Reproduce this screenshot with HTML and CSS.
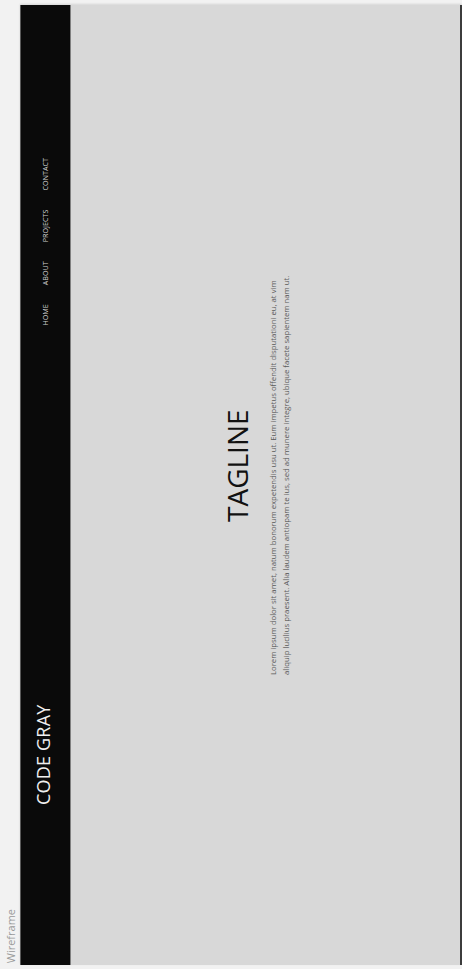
FILE: index.html
```html
<!DOCTYPE html>
<html lang="en">
<head>
<meta charset="utf-8">
<title>Code Gray – Wireframe</title>
<link rel="stylesheet" href="styles.css">
</head>
<body>
<div class="page">
  <div class="label-col"><span class="label">Wireframe</span></div>
  <div class="viewport">
    <div class="site">
      <header class="header">
        <div class="logo">CODE GRAY</div>
        <nav class="nav">
          <a class="nav-link" href="#">HOME</a>
          <a class="nav-link" href="#">ABOUT</a>
          <a class="nav-link" href="#">PROJECTS</a>
          <a class="nav-link" href="#">CONTACT</a>
        </nav>
      </header>
      <main class="main">
        <section class="hero">
          <h1 class="tagline">TAGLINE</h1>
          <p class="lead">Lorem ipsum dolor sit amet, natum bonorum expetendis usu ut. Eum impetus offendit disputationi eu, at vim<br>aliquip lucilius praesent. Alia laudem antiopam te ius, sed ad munere integre, ubique facete sapientem nam ut.</p>
        </section>
      </main>
    </div>
  </div>
</div>
</body>
</html>
```

FILE: styles.css
```css
html, body {
  margin: 0;
  padding: 0;
}
body {
  background: #f2f2f2;
  font-family: "Open Sans", "DejaVu Sans", sans-serif;
  overflow: hidden;
}
.page {
  display: flex;
  height: 969px;
}
.label-col {
  width: 20px;
  display: flex;
  align-items: flex-end;
  justify-content: center;
  padding-bottom: 6px;
  box-sizing: border-box;
}
.label {
  writing-mode: vertical-rl;
  transform: rotate(180deg);
  font-size: 11px;
  color: #9a9a9a;
  line-height: 1;
}
.viewport {
  margin-top: 5px;
  width: 442px;
  height: 960px;
  overflow: hidden;
  box-shadow: 0 -1px 2px rgba(0, 0, 0, 0.12);
}
.site {
  width: 960px;
  height: 442px;
  box-sizing: border-box;
  transform-origin: 0 0;
  transform: translateY(960px) rotate(-90deg);
  display: flex;
  flex-direction: column;
  background: #d8d8d8;
  border-bottom: 2px solid #3c3c3c;
}
.header {
  height: 51px;
  box-sizing: border-box;
  background: #0a0a0a;
  border-top: 1px solid #5a5a5a;
  border-bottom: 1px solid #808080;
  display: flex;
  align-items: center;
  justify-content: space-between;
  padding: 0 153px 0 160px;
}
.logo {
  color: #f0f0f0;
  font-size: 18px;
  line-height: 1;
  letter-spacing: 0.2px;
  margin-bottom: 5px;
}
.nav {
  display: flex;
  gap: 19px;
  align-items: center;
}
.nav-link {
  color: #cfcfcf;
  text-decoration: none;
  font-size: 7.2px;
  line-height: 1;
}
.main {
  flex: 1;
  padding-top: 152px;
}
.hero {
  margin-left: 290px;
  display: flex;
  flex-direction: column;
}
.tagline {
  margin: 0 0 0 153px;
  font-size: 28px;
  font-weight: 400;
  line-height: 1;
  color: #111;
}
.lead {
  margin: 16px 0 0;
  font-size: 7.75px;
  line-height: 13px;
  color: #5a5a5a;
  white-space: nowrap;
}
```
